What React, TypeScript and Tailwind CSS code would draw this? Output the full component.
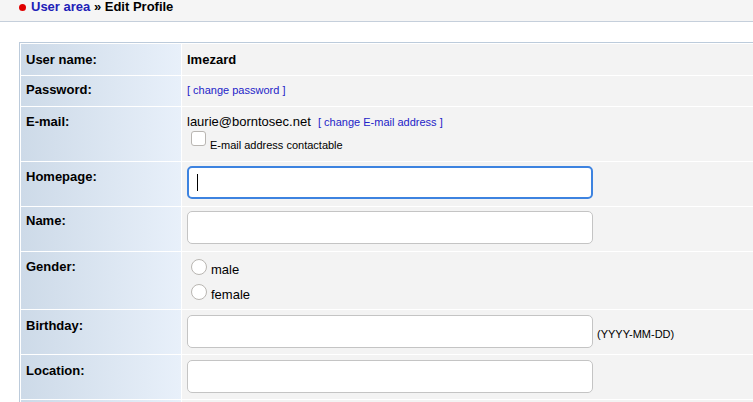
import React from "react";

const labelCls =
  "w-[160px] align-top pl-[5px] text-[13px] leading-[20px] font-bold text-black bg-gradient-to-r from-[#cddae8] to-[#e8f0fa]";
const valueCls = "align-top pl-[5px] bg-[#f3f3f3] text-black";

function TextInput() {
  return (
    <div className="w-[406px] h-[33px] rounded-[5px] border border-[#c4c4c4] bg-white" />
  );
}

function Radio({ label }: { label: string }) {
  return (
    <div className="flex items-end h-[25px] pl-[4px]">
      <span className="w-[16px] h-[16px] rounded-full border border-[#b9b6b2] bg-white" />
      <span className="relative top-[3px] ml-[4px] text-[13px] leading-[16px]">{label}</span>
    </div>
  );
}

export default function App() {
  return (
    <div
      className="w-[753px] h-[402px] overflow-hidden bg-white"
      style={{ fontFamily: '"Liberation Sans", Arial, sans-serif' }}
    >
      <div className="h-[22px] bg-[#f5f5f5] border-b border-[#c5cfdb] flex items-start pl-[19px]">
        <span className="w-[7px] h-[7px] rounded-full bg-[#e00000] mt-[4px] mr-[5px]" />
        <span className="text-[13px] font-bold leading-[16px] mt-[-1px]">
          <a className="text-[#2020b8]">User area</a>
          <span className="text-black"> » Edit Profile</span>
        </span>
      </div>

      <div className="mt-[20px] ml-[19px] w-[900px]">
        <table className="w-full border-separate border-spacing-[1px] border border-[#bccbdb] bg-white">
          <tbody>
            <tr>
              <td className={`${labelCls} h-[31px] pt-[6px]`}>User name:</td>
              <td className={`${valueCls} pt-[6px] text-[13px] leading-[20px] font-bold`}>lmezard</td>
            </tr>
            <tr>
              <td className={`${labelCls} h-[30px] pt-[4px]`}>Password:</td>
              <td className={`${valueCls} pt-[4px] text-[11px] leading-[20px]`}>
                <a className="text-[#2323c8]">[ change password ]</a>
              </td>
            </tr>
            <tr>
              <td className={`${labelCls} h-[54px] pt-[5px]`}>E-mail:</td>
              <td className={`${valueCls} pt-[5px] text-[13px]`}>
                <div className="leading-[20px]">
                  laurie@borntosec.net&nbsp;&nbsp;
                  <a className="text-[11px] text-[#2323c8]">[ change E-mail address ]</a>
                </div>
                <div className="flex items-end mt-[-1px] pl-[4px]">
                  <span className="w-[15px] h-[15px] rounded-[3px] border border-[#b9b6b2] bg-white" />
                  <span className="relative top-[5px] ml-[4px] text-[11px] leading-[12px]">
                    E-mail address contactable
                  </span>
                </div>
              </td>
            </tr>
            <tr>
              <td className={`${labelCls} h-[44px] pt-[5px]`}>Homepage:</td>
              <td className={`${valueCls} pt-[4px]`}>
                <div className="relative w-[406px] h-[33px] rounded-[5px] border-2 border-[#3d83e0] bg-white">
                  <span className="absolute left-[8px] top-[6px] w-[1px] h-[17px] bg-black" />
                </div>
              </td>
            </tr>
            <tr>
              <td className={`${labelCls} h-[44px] pt-[4px]`}>Name:</td>
              <td className={`${valueCls} pt-[4px]`}>
                <TextInput />
              </td>
            </tr>
            <tr>
              <td className={`${labelCls} h-[57px] pt-[5px]`}>Gender:</td>
              <td className={`${valueCls} pt-[0px]`}>
                <div className="mt-[-2px]">
                  <Radio label="male" />
                  <Radio label="female" />
                </div>
              </td>
            </tr>
            <tr>
              <td className={`${labelCls} h-[44px] pt-[6px]`}>Birthday:</td>
              <td className={`${valueCls} pt-[5px]`}>
                <div className="flex items-center">
                  <TextInput />
                  <span className="relative top-[2px] ml-[4px] text-[11px] leading-[14px]">(YYYY-MM-DD)</span>
                </div>
              </td>
            </tr>
            <tr>
              <td className={`${labelCls} h-[44px] pt-[6px]`}>Location:</td>
              <td className={`${valueCls} pt-[5px]`}>
                <TextInput />
              </td>
            </tr>
            <tr>
              <td className={`${labelCls} h-[44px] pt-[6px]`}></td>
              <td className={`${valueCls} pt-[5px]`}>
                <TextInput />
              </td>
            </tr>
          </tbody>
        </table>
      </div>
    </div>
  );
}
